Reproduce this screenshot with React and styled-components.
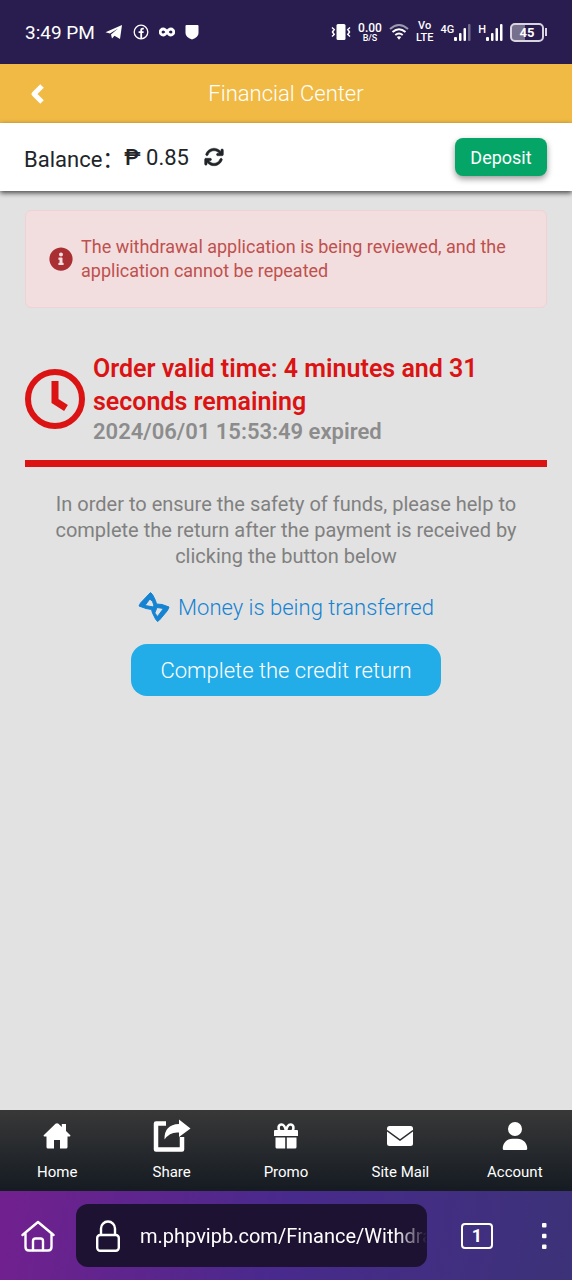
import React from "react";
import styled, { createGlobalStyle } from "styled-components";
import { FaInfoCircle } from "react-icons/fa";
import { FaArrowsRotate, FaUser } from "react-icons/fa6";

const tabs = [
  { label: "Home", icon: <HouseIcon /> },
  { label: "Share", icon: <ShareIcon /> },
  { label: "Promo", icon: <GiftIcon /> },
  { label: "Site Mail", icon: <MailIcon /> },
  { label: "Account", icon: <FaUser size={28} /> },
];

const App = () => {
  return (
    <React.Fragment>
      <GlobalStyle />
      <Screen>
        <StatusBar>
          <StatusGroup>
            <Clock>3:49 PM</Clock>
            <TelegramIcon />
            <FacebookIcon />
            <InfinityIcon />
            <ShieldIcon />
          </StatusGroup>
          <StatusRight>
            <VibrateIcon />
            <Stack>
              <Speed>0.00</Speed>
              <Unit>B/S</Unit>
            </Stack>
            <WifiIcon />
            <Stack>
              <Small>Vo</Small>
              <Small>LTE</Small>
            </Stack>
            <Signal>
              <Small>4G</Small>
              <BarsIcon weak />
            </Signal>
            <Signal>
              <Small>H</Small>
              <BarsIcon />
            </Signal>
            <Battery>
              <Level>45</Level>
              <Tip />
            </Battery>
          </StatusRight>
        </StatusBar>

        <Header>
          <BackButton aria-label="Back">
            <ChevronIcon />
          </BackButton>
          <Title>Financial Center</Title>
        </Header>

        <BalanceBar>
          <Balance>
            <span>Balance：</span>
            <Amount>
              <Peso>₱</Peso> 0.85
            </Amount>
            <RefreshButton aria-label="Refresh balance">
              <FaArrowsRotate size={20} stroke="currentColor" strokeWidth={12} />
            </RefreshButton>
          </Balance>
          <DepositButton>Deposit</DepositButton>
        </BalanceBar>

        <Content>
          <Alert role="alert">
            <AlertIcon>
              <FaInfoCircle size={24} />
            </AlertIcon>
            <AlertText>
              The withdrawal application is being reviewed, and the application
              cannot be repeated
            </AlertText>
          </Alert>

          <Order>
            <ClockIcon />
            <div>
              <Remaining>
                Order valid time: 4 minutes and 31 seconds remaining
              </Remaining>
              <Expired>2024/06/01 15:53:49 expired</Expired>
            </div>
          </Order>

          <Notice>
            In order to ensure the safety of funds, please help to complete the
            return after the payment is received by clicking the button below
          </Notice>

          <Transfer>
            <HourglassIcon />
            <span>Money is being transferred</span>
          </Transfer>

          <CompleteButton>Complete the credit return</CompleteButton>
        </Content>

        <TabBar>
          {tabs.map((tab) => (
            <Tab key={tab.label} href="#">
              <TabIcon>{tab.icon}</TabIcon>
              {tab.label}
            </Tab>
          ))}
        </TabBar>

        <BrowserBar>
          <BrowserButton aria-label="Browser home">
            <BrowserHomeIcon />
          </BrowserButton>
          <AddressBox>
            <LockIcon />
            <Address
              aria-label="Address"
              readOnly
              value="m.phpvipb.com/Finance/Withdrawal"
            />
          </AddressBox>
          <BrowserButton aria-label="Open tabs">
            <TabCount>1</TabCount>
          </BrowserButton>
          <MenuButton aria-label="Menu">
            <DotsIcon />
          </MenuButton>
        </BrowserBar>
      </Screen>
    </React.Fragment>
  );
};

export default App;

function TelegramIcon() {
  return (
    <svg width="18" height="16" viewBox="0 0 18 16" fill="#fff">
      <path d="M17 1 15 15 9.500 11.800 7 14.500 6 10.500 13 4.500 5 9.500 .5 8.300Z" />
    </svg>
  );
}

function FacebookIcon() {
  return (
    <svg width="16" height="16" viewBox="0 0 16 16" fill="none" stroke="#fff">
      <circle cx="8" cy="8" r="6.800" strokeWidth="1.300" />
      <path d="M10.800 4.600H9.800Q8.200 4.600 8.200 6.200V14.500M5.600 8.200H10.600" strokeWidth="1.800" />
    </svg>
  );
}

function InfinityIcon() {
  return (
    <svg width="16" height="10" viewBox="0 0 16 10" fill="none" stroke="#fff" strokeWidth="2.800">
      <path d="M8 5C6.500 2.600 5.500 2 4.200 2A3 3 0 0 0 4.200 8C5.500 8 6.500 7.400 8 5S10.500 2 11.800 2A3 3 0 0 1 11.800 8C10.500 8 9.500 7.400 8 5Z" />
    </svg>
  );
}

function ShieldIcon() {
  return (
    <svg width="14" height="16" viewBox="0 0 14 16" fill="#fff">
      <path d="M1.500 1H12.500Q13.500 1 13.500 2V9Q13.500 13 7 15.500 .5 13 .5 9V2Q.5 1 1.500 1Z" />
    </svg>
  );
}

function VibrateIcon() {
  return (
    <svg width="20" height="18" viewBox="0 0 20 18" fill="none" stroke="#fff" strokeWidth="1.500">
      <rect x="5.500" y="1" width="9" height="16" rx="1.500" fill="#fff" stroke="none" />
      <path d="M1 4.500 3.200 6.500 1.500 9 3.200 11.500 1 13.500M19 4.500 16.800 6.500 18.500 9 16.800 11.500 19 13.500" />
    </svg>
  );
}

function WifiIcon() {
  return (
    <svg width="20" height="18" viewBox="0 0 20 18" fill="none" stroke="#fff" strokeWidth="1.900">
      <path d="M1 6Q10-2 19 6" opacity=".55" />
      <path d="M3.500 9Q10 3.300 16.500 9M6.300 12Q10 8.800 13.700 12" />
      <path d="M7.800 14Q10 12.600 12.200 14L10 16.800Z" fill="#fff" stroke="none" />
    </svg>
  );
}

function BarsIcon({ weak }) {
  return (
    <svg width="17" height="17" viewBox="0 0 17 17" fill="#fff">
      <rect x="0" y="13" width="3" height="4" rx="1" />
      <rect x="5" y="9" width="2.500" height="8" rx="1" />
      <rect x="9.500" y="4" width="2.500" height="13" rx="1" />
      <rect x="14" y="0" width="2.500" height="17" rx="1" opacity={weak ? 0.35 : 1} />
    </svg>
  );
}

function ChevronIcon() {
  return (
    <svg width="14" height="22" viewBox="0 0 14 22" fill="none" stroke="#fff" strokeWidth="5">
      <path d="M12 3 4 11 12 19" strokeLinejoin="round" />
    </svg>
  );
}

function ClockIcon() {
  return (
    <ClockSvg viewBox="0 0 60 60" fill="none" stroke="#db1313">
      <circle cx="30" cy="30" r="27" strokeWidth="6" />
      <path d="M30 12V32L41 39" strokeWidth="7" />
    </ClockSvg>
  );
}

function HourglassIcon() {
  return (
    <svg width="32" height="32" viewBox="0 0 32 32" fill="#1583d2" stroke="#1583d2" strokeLinejoin="round">
      <path
        d="M12.500 1.500 14.500 3.500 17.500 9.500 18.500 13 24 13.500 31 16 29.500 19.500 21.500 29 19.500 30.500 17.500 28 14.500 22 13.500 18.500 8 17.500 1 15 2.500 12ZM11.800 8 7 14.500 14.500 15.800 16 14.500 14.500 10.500ZM19 16.500 16.800 22 19.500 25.500 25.500 17.500Z"
        fillRule="evenodd"
        strokeWidth="1"
      />
    </svg>
  );
}

function HouseIcon() {
  return (
    <svg width="28" height="26" viewBox="0 0 28 26" fill="#fff">
      <path d="M15.500 .8 18.800 4V1H23V8L27.300 12.200Q27.800 13.500 26.500 13.500H24.500V24Q24.500 25.500 23 25.500H17V17H11V25.500H5Q3.500 25.500 3.500 24V13.500H1.500Q.2 13.500 .7 12.200L12.500.8Q14-.5 15.500.8Z" />
    </svg>
  );
}

function ShareIcon() {
  return (
    <svg width="38" height="34" viewBox="0 0 38 34">
      <path d="M13 4.500H3V30.500H29V18" fill="none" stroke="#fff" strokeWidth="4.500" strokeLinejoin="round" />
      <path d="M26 .5 37.500 9.500 26 18V13.500Q17 12.500 11.500 20.500 11 5.500 26 5Z" fill="#fff" />
    </svg>
  );
}

function GiftIcon() {
  return (
    <svg width="24" height="26" viewBox="0 0 24 26" fill="#fff">
      <path d="M1 7H23Q24 7 24 8V13H0V8Q0 7 1 7ZM1.500 14.500H11.200V25.500H3Q1.500 25.500 1.500 24ZM12.800 14.500H22.500V24Q22.500 25.500 21 25.500H12.800Z" />
      <path d="M12 8C11 3 9.500 1.500 7.500 1.500 4 1.500 4 6 5.500 8M12 8C13 3 14.500 1.500 16.500 1.500 20 1.500 20 6 18.500 8" fill="none" stroke="#fff" strokeWidth="2.600" />
    </svg>
  );
}

function MailIcon() {
  return (
    <svg width="26" height="20" viewBox="0 0 26 20">
      <rect width="26" height="20" rx="2.500" fill="#fff" />
      <path d="M0 4.500 13 14 26 4.500" fill="none" stroke="#2b2d2f" strokeWidth="1.500" />
    </svg>
  );
}

function BrowserHomeIcon() {
  return (
    <svg width="34" height="32" viewBox="0 0 34 32" fill="none" stroke="#fff" strokeWidth="2.400" strokeLinecap="round" strokeLinejoin="round">
      <path d="M1.500 15 17 2 32.500 15M4.500 13V27Q4.500 30.500 8 30.500H27Q30.500 30.500 30.500 27V13" />
      <path d="M12 30V21Q12 18.500 14.500 18.500H19.500Q22 18.500 22 21V30" />
    </svg>
  );
}

function LockIcon() {
  return (
    <LockSvg viewBox="0 0 24 32" fill="none" stroke="#fff" strokeWidth="2.400">
      <rect x="1.200" y="15" width="21.600" height="15.800" rx="3" />
      <path d="M5 15V8.500A7 7 0 0 1 19 8.500V15" />
    </LockSvg>
  );
}

function DotsIcon() {
  return (
    <svg width="6" height="26" viewBox="0 0 6 26" fill="#fff">
      <rect x="1" y="0" width="4.500" height="4.500" rx="1" />
      <rect x="1" y="10.700" width="4.500" height="4.500" rx="1" />
      <rect x="1" y="21.400" width="4.500" height="4.500" rx="1" />
    </svg>
  );
}

const GlobalStyle = createGlobalStyle`
  * {
    box-sizing: border-box;
  }
  body {
    margin: 0;
    background-color: #e2e2e2;
    font-family: Roboto, "Noto Sans CJK SC", sans-serif;
  }
  button {
    padding: 0;
    border: 0;
    background: none;
    color: inherit;
    font-family: inherit;
  }
  svg {
    display: block;
    flex-shrink: 0;
  }
`;

const Screen = styled.div`
  display: flex;
  flex-direction: column;
  min-height: 100vh;
`;

const StatusBar = styled.div`
  display: flex;
  align-items: center;
  justify-content: space-between;
  height: 64px;
  padding: 0 25px;
  background-color: #291d4f;
  color: #ffffff;
`;

const StatusGroup = styled.div`
  display: flex;
  align-items: center;
  gap: 10px;
`;

const StatusRight = styled(StatusGroup)`
  gap: 7px;
`;

const Clock = styled.span`
  font-size: 19px;
`;

const Stack = styled.div`
  display: flex;
  flex-direction: column;
  align-items: center;
`;

const Small = styled.span`
  font-size: 11px;
  line-height: 12px;
  font-weight: 500;
`;

const Speed = styled(Small)`
  font-size: 12px;
`;

const Unit = styled(Small)`
  font-size: 9px;
  line-height: 9px;
`;

const Signal = styled.div`
  display: flex;
  align-items: flex-start;
`;

const Battery = styled.div`
  display: flex;
  align-items: center;
  gap: 1px;
`;

const Level = styled.span`
  width: 34px;
  border: 2px solid #d8d5e0;
  border-radius: 5px;
  background: linear-gradient(90deg, #77708d 45%, #291d4f 45%);
  font-size: 13px;
  line-height: 15px;
  font-weight: 700;
  text-align: center;
`;

const Tip = styled.span`
  width: 2px;
  height: 8px;
  background-color: #d8d5e0;
`;

const Header = styled.header`
  display: grid;
  grid-template-columns: 60px 1fr 60px;
  align-items: center;
  height: 59px;
  background-color: #f0ba45;
  color: #ffffff;
`;

const BackButton = styled.button`
  display: flex;
  padding-left: 30px;
`;

const Title = styled.h1`
  margin: 0;
  font-size: 22px;
  font-weight: 350;
  text-align: center;
`;

const BalanceBar = styled.div`
  display: flex;
  align-items: center;
  justify-content: space-between;
  height: 68px;
  padding: 0 25px 0 24px;
  background-color: #ffffff;
  box-shadow: 0 2px 5px rgba(0, 0, 0, 0.7);
`;

const Balance = styled.div`
  display: flex;
  align-items: center;
  color: #212529;
  font-size: 22px;
`;

const Amount = styled.span`
  margin-right: 15px;
`;

const Peso = styled.span`
  font-weight: 500;
`;

const RefreshButton = styled.button`
  display: flex;
`;

const DepositButton = styled.button`
  width: 92px;
  height: 38px;
  border-radius: 8px;
  background-color: #05a568;
  box-shadow: 0 3px 6px rgba(0, 0, 0, 0.4);
  color: #ffffff;
  font-size: 18px;
`;

const Content = styled.main`
  display: flex;
  flex: 1;
  flex-direction: column;
  align-items: center;
  padding: 19px 25px;
`;

const Alert = styled.div`
  display: flex;
  align-items: center;
  width: 100%;
  padding: 24px 23px;
  border: 1px solid #f0d2d4;
  border-radius: 6px;
  background-color: #f2dede;
  color: #c0504e;
`;

const AlertIcon = styled.span`
  color: #a92f33;
  margin-right: 8px;
`;

const AlertText = styled.p`
  margin: 0;
  font-size: 18px;
  line-height: 24px;
`;

const Order = styled.section`
  display: flex;
  align-items: center;
  width: 100%;
  margin-top: 44px;
  padding-bottom: 14px;
  border-bottom: 7px solid #db1313;
`;

const ClockSvg = styled.svg`
  width: 60px;
  height: 60px;
  margin-right: 8px;
`;

const Remaining = styled.div`
  color: #db1313;
  font-size: 25px;
  line-height: 33px;
  font-weight: 600;
`;

const Expired = styled.div`
  color: #8c8c8c;
  font-size: 22px;
  line-height: 28px;
  font-weight: 600;
`;

const Notice = styled.p`
  margin: 24px 24px 0;
  color: #808080;
  font-size: 20px;
  line-height: 26px;
  text-align: center;
`;

const Transfer = styled.div`
  display: flex;
  align-items: center;
  gap: 8px;
  margin-top: 22px;
  color: #1583d2;
  font-size: 22px;
  font-weight: 350;
`;

const CompleteButton = styled.button`
  width: 310px;
  height: 52px;
  margin-top: 21px;
  border-radius: 16px;
  background-color: #22ade9;
  color: #ffffff;
  font-size: 22px;
  font-weight: 350;
`;

const TabBar = styled.nav`
  display: grid;
  grid-template-columns: repeat(5, 1fr);
  height: 81px;
  background: linear-gradient(#383838, #151b22);
`;

const Tab = styled.a`
  display: flex;
  flex-direction: column;
  align-items: center;
  padding-top: 8px;
  color: #ffffff;
  font-size: 15px;
  line-height: 20px;
  text-decoration: none;
`;

const TabIcon = styled.span`
  display: flex;
  align-items: center;
  height: 36px;
  margin-bottom: 8px;
`;

const BrowserBar = styled.div`
  display: flex;
  align-items: center;
  height: 89px;
  padding: 0 25px 0 21px;
  background: linear-gradient(100deg, #72208f, #482a8c 50%, #3c3278);
  color: #ffffff;
`;

const BrowserButton = styled.button`
  display: flex;
`;

const AddressBox = styled.div`
  display: flex;
  flex: 1;
  align-items: center;
  min-width: 0;
  height: 63px;
  margin: 0 34px 0 21px;
  padding-left: 20px;
  border-radius: 12px;
  background-color: #1e1233;
`;

const LockSvg = styled.svg`
  width: 24px;
  height: 32px;
  margin-right: 20px;
`;

const Address = styled.input`
  flex: 1;
  min-width: 0;
  padding: 0;
  border: 0;
  outline: 0;
  background: none;
  color: #ffffff;
  font-family: inherit;
  font-size: 20px;
  mask-image: linear-gradient(90deg, #000 calc(100% - 32px), transparent);
`;

const TabCount = styled.span`
  width: 32px;
  border: 2px solid #ffffff;
  border-radius: 4px;
  font-size: 18px;
  line-height: 22px;
  font-weight: 700;
`;

const MenuButton = styled(BrowserButton)`
  margin-left: 48px;
`;
